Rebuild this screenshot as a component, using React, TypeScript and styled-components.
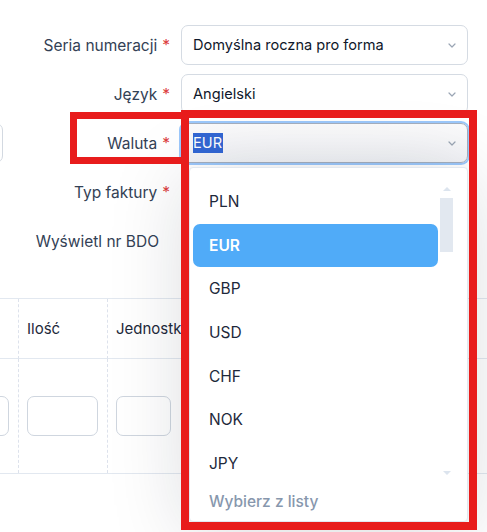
import React from 'react'
import styled, { createGlobalStyle } from 'styled-components'

const GlobalStyle = createGlobalStyle`
  html, body {
    margin: 0;
    padding: 0;
    background: #fff;
  }
  body {
    font-family: Inter, 'Noto Sans', sans-serif;
    -webkit-font-smoothing: antialiased;
  }
  * {
    box-sizing: border-box;
  }
`

const currencies = ['PLN', 'EUR', 'GBP', 'USD', 'CHF', 'NOK', 'JPY']

const Chevron: React.FC = () => (
  <svg width="8" height="5" viewBox="0 0 8 5" fill="none">
    <path d="M1 1l3 3 3-3" stroke="#9aa5b4" strokeWidth="1.2" strokeLinecap="round" strokeLinejoin="round" />
  </svg>
)

const App: React.FC = () => {
  return (
    <Page>
      <GlobalStyle />
      <FormGrid>
        <span />
        <Label>
          Seria numeracji<Required>*</Required>
        </Label>
        <Select>
          <span>Domyślna roczna pro forma</span>
          <Chevron />
        </Select>

        <span />
        <Label>
          Język<Required>*</Required>
        </Label>
        <Select>
          <span>Angielski</span>
          <Chevron />
        </Select>

        <SideField />
        <Label>
          Waluta<Required>*</Required>
        </Label>
        <Select $focused>
          <Selected>EUR</Selected>
          <Chevron />
        </Select>

        <span />
        <Label>
          Typ faktury<Required>*</Required>
        </Label>
        <Select>
          <span />
          <Chevron />
        </Select>

        <span />
        <Label $plain>Wyświetl nr BDO</Label>
        <span />
      </FormGrid>

      <Table>
        <HeadCell />
        <HeadCell $dashed>Ilość</HeadCell>
        <HeadCell $dashed>Jednostka</HeadCell>
        <HeadCell $dashed />

        <BodyCell $end>
          <CellInput $w={60} />
        </BodyCell>
        <BodyCell $dashed>
          <CellInput $w={71} />
        </BodyCell>
        <BodyCell $dashed>
          <CellInput $w={55} />
        </BodyCell>
        <BodyCell $dashed />
      </Table>

      <Dropdown>
        <Options>
          {currencies.map((c) => (
            <Option key={c} $active={c === 'EUR'}>
              {c}
            </Option>
          ))}
          <Placeholder>Wybierz z listy</Placeholder>
        </Options>
        <Scrollbar>
          <ArrowUp />
          <Thumb />
          <Spacer />
          <ArrowDown />
        </Scrollbar>
      </Dropdown>

      <Highlight $x={70} $y={112} $w={119} $h={52} $b={7} />
      <Highlight $x={181} $y={110} $w={296} $h={420} $b={8} />
    </Page>
  )
}

const Page = styled.div`
  position: relative;
  width: 487px;
  height: 532px;
  overflow: hidden;
  background: #fff;
`

const FormGrid = styled.div`
  display: grid;
  grid-template-columns: 3px 152px 287px;
  grid-auto-rows: 40px;
  column-gap: 13px;
  row-gap: 9px;
  padding-top: 25px;
`

const Label = styled.label<{ $plain?: boolean }>`
  display: flex;
  align-items: center;
  justify-content: flex-end;
  margin-right: -2px;
  padding-right: ${(p) => (p.$plain ? '11px' : '0')};
  font-size: 15.5px;
  color: #334155;
  white-space: nowrap;
`

const Required = styled.span`
  color: #dc3b3b;
  margin-left: 5px;
`

const SideField = styled.div`
  justify-self: end;
  width: 60px;
  height: 40px;
  flex-shrink: 0;
  border: 1px solid #d3d9e1;
  border-radius: 7px;
  background: #fff;
`

const Select = styled.div<{ $focused?: boolean }>`
  display: flex;
  align-items: center;
  justify-content: space-between;
  height: 40px;
  padding: 0 11px 0 11px;
  border: 1px solid ${(p) => (p.$focused ? '#a4afbf' : '#d5dbe3')};
  border-radius: 7px;
  background: ${(p) => (p.$focused ? 'linear-gradient(#fbfbfc, #f2f3f6)' : '#fff')};
  box-shadow: ${(p) => (p.$focused ? '0 0 0 2px #9cc8fb' : 'none')};
  font-size: 14.6px;
  color: #0f172a;
  white-space: nowrap;
`

const Selected = styled.span`
  background: #3267d4;
  color: #fff;
  line-height: 20px;
  padding-right: 1px;
`

const Table = styled.div`
  display: grid;
  grid-template-columns: 18px 89px 200px 1fr;
  grid-template-rows: 60px 114px;
  margin-top: 37px;
  border-top: 1px solid #e2e8f0;
  border-bottom: 1px solid #e2e8f0;
`

const HeadCell = styled.div<{ $dashed?: boolean }>`
  display: flex;
  align-items: center;
  padding-left: 8px;
  font-size: 15px;
  color: #1e293b;
  white-space: nowrap;
  overflow: hidden;
  border-bottom: 1px solid #e2e8f0;
  border-left: ${(p) => (p.$dashed ? '1px dashed #dde2ec' : 'none')};
`

const BodyCell = styled.div<{ $dashed?: boolean; $end?: boolean }>`
  display: flex;
  align-items: center;
  justify-content: ${(p) => (p.$end ? 'flex-end' : 'flex-start')};
  padding: ${(p) => (p.$end ? '0 9px 0 0' : '0 0 0 8px')};
  border-left: ${(p) => (p.$dashed ? '1px dashed #dde2ec' : 'none')};
`

const CellInput = styled.div<{ $w: number }>`
  flex-shrink: 0;
  width: ${(p) => p.$w}px;
  height: 40px;
  border: 1px solid #cfd6df;
  border-radius: 7px;
  background: #fff;
`

const Dropdown = styled.div`
  position: absolute;
  left: 189px;
  top: 167px;
  width: 279px;
  height: 355px;
  display: flex;
  padding: 12px 14px 0 3px;
  background: #fff;
  border: 1px solid #e2e8f0;
  border-radius: 4px;
  box-shadow: 0 10px 80px rgba(15, 23, 42, 0.17);
  overflow: hidden;
`

const Options = styled.ul`
  list-style: none;
  margin: 0;
  padding: 0;
  width: 245px;
  flex-shrink: 0;
`

const Option = styled.li<{ $active?: boolean }>`
  display: flex;
  align-items: center;
  height: 43.6px;
  padding-left: 16px;
  border-radius: 7px;
  font-size: 15.5px;
  font-weight: ${(p) => (p.$active ? 600 : 400)};
  color: ${(p) => (p.$active ? '#fff' : '#1e293b')};
  background: ${(p) => (p.$active ? '#50abf8' : 'transparent')};
`

const Placeholder = styled.li`
  display: flex;
  align-items: center;
  height: 33px;
  padding-left: 16px;
  font-size: 15.5px;
  font-weight: 500;
  color: #8797ad;
`

const Scrollbar = styled.div`
  display: flex;
  flex-direction: column;
  align-items: center;
  width: 13px;
  margin-left: 2px;
  padding: 7px 0 46px;
`

const ArrowUp = styled.div`
  width: 0;
  height: 0;
  border-left: 4px solid transparent;
  border-right: 4px solid transparent;
  border-bottom: 4px solid #dce4ee;
`

const ArrowDown = styled.div`
  width: 0;
  height: 0;
  border-left: 4px solid transparent;
  border-right: 4px solid transparent;
  border-top: 4px solid #dce4ee;
`

const Thumb = styled.div`
  width: 13px;
  height: 54px;
  margin-top: 7px;
  background: #e2e8f0;
`

const Spacer = styled.div`
  flex: 1;
`

const Highlight = styled.div<{ $x: number; $y: number; $w: number; $h: number; $b: number }>`
  position: absolute;
  left: ${(p) => p.$x}px;
  top: ${(p) => p.$y}px;
  width: ${(p) => p.$w}px;
  height: ${(p) => p.$h}px;
  border: ${(p) => p.$b}px solid #e81c1c;
  pointer-events: none;
`

export default App
